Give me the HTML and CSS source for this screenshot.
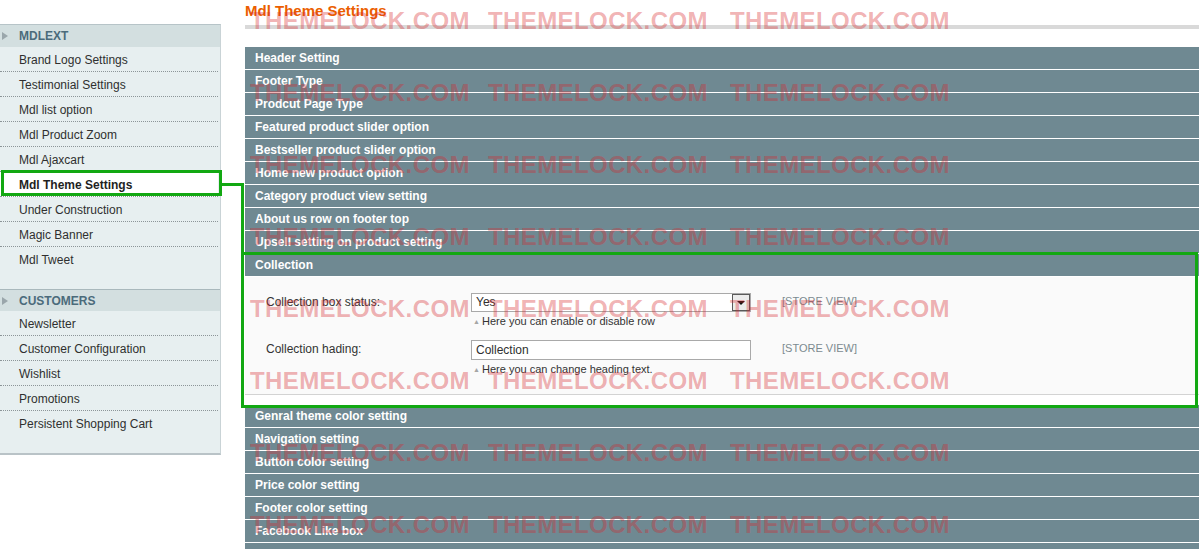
FILE: index.html
```html
<!DOCTYPE html>
<html>
<head>
<meta charset="utf-8">
<title>Mdl Theme Settings</title>
<link rel="stylesheet" href="styles.css">
</head>
<body>
<div class="page">
  <aside class="side">
    <div class="side-head"><span class="tri"></span>MDLEXT</div>
    <ul class="side-list">
      <li>Brand Logo Settings</li>
      <li>Testimonial Settings</li>
      <li>Mdl list option</li>
      <li>Mdl Product Zoom</li>
      <li>Mdl Ajaxcart</li>
      <li class="active">Mdl Theme Settings</li>
      <li>Under Construction</li>
      <li>Magic Banner</li>
      <li>Mdl Tweet</li>
    </ul>
    <div class="side-head group"><span class="tri"></span>CUSTOMERS</div>
    <ul class="side-list">
      <li>Newsletter</li>
      <li>Customer Configuration</li>
      <li>Wishlist</li>
      <li>Promotions</li>
      <li>Persistent Shopping Cart</li>
    </ul>
  </aside>

  <main class="main">
    <h3 class="title">Mdl Theme Settings</h3>
    <div class="sections">
      <div class="sec-row">Header Setting</div>
      <div class="sec-row">Footer Type</div>
      <div class="sec-row">Prodcut Page Type</div>
      <div class="sec-row">Featured product slider option</div>
      <div class="sec-row">Bestseller product slider option</div>
      <div class="sec-row">Home new product option</div>
      <div class="sec-row">Category product view setting</div>
      <div class="sec-row">About us row on footer top</div>
      <div class="sec-row">Upsell setting on product setting</div>
      <div class="sec-row">Collection</div>
      <div class="fieldset">
        <div class="field">
          <label class="label">Collection box status:</label>
          <div class="value">
            <div class="select"><span class="sel-text">Yes</span><span class="sel-btn"><span class="caret"></span></span></div>
            <p class="note"><span class="note-tri">&#9650;</span>Here you can enable or disable row</p>
          </div>
          <span class="scope">[STORE VIEW]</span>
        </div>
        <div class="field second">
          <label class="label">Collection hading:</label>
          <div class="value">
            <div class="input">Collection</div>
            <p class="note"><span class="note-tri">&#9650;</span>Here you can change heading text.</p>
          </div>
          <span class="scope">[STORE VIEW]</span>
        </div>
      </div>
      <div class="sec-row">Genral theme color setting</div>
      <div class="sec-row">Navigation setting</div>
      <div class="sec-row">Button color setting</div>
      <div class="sec-row">Price color setting</div>
      <div class="sec-row">Footer color setting</div>
      <div class="sec-row">Facebook Like box</div>
      <div class="sec-row short"></div>
    </div>
  </main>

  <div class="hl hl-side"></div>
  <div class="hl-line hl-h"></div>
  <div class="hl-line hl-v"></div>
  <div class="hl hl-main"></div>

  <div class="wm">
    <span>THEMELOCK.COM</span><span>THEMELOCK.COM</span><span>THEMELOCK.COM</span>
    <span>THEMELOCK.COM</span><span>THEMELOCK.COM</span><span>THEMELOCK.COM</span>
    <span>THEMELOCK.COM</span><span>THEMELOCK.COM</span><span>THEMELOCK.COM</span>
    <span>THEMELOCK.COM</span><span>THEMELOCK.COM</span><span>THEMELOCK.COM</span>
    <span>THEMELOCK.COM</span><span>THEMELOCK.COM</span><span>THEMELOCK.COM</span>
    <span>THEMELOCK.COM</span><span>THEMELOCK.COM</span><span>THEMELOCK.COM</span>
    <span>THEMELOCK.COM</span><span>THEMELOCK.COM</span><span>THEMELOCK.COM</span>
    <span>THEMELOCK.COM</span><span>THEMELOCK.COM</span><span>THEMELOCK.COM</span>
  </div>
</div>
</body>
</html>
```

FILE: styles.css
```css
* { box-sizing: border-box; }

html, body {
  margin: 0;
  padding: 0;
  background: #ffffff;
  overflow: hidden;
}

body {
  font-family: "Liberation Sans", Arial, Helvetica, sans-serif;
  font-size: 12px;
  color: #2f2f2f;
}

.page {
  position: relative;
  display: flex;
  align-items: flex-start;
  width: 1199px;
  height: 549px;
  overflow: hidden;
}

/* ---------- sidebar ---------- */
.side {
  width: 221px;
  margin-top: 24px;
  background: #e7eff0;
  border-top: 1px solid #b7c4c8;
  border-right: 1px solid #c9d3d6;
  border-bottom: 2px solid #b9c3c7;
  flex-shrink: 0;
}

.side-head {
  position: relative;
  height: 22px;
  line-height: 22px;
  padding-left: 19px;
  background: #d3dfe0;
  color: #4b6b7b;
  font-weight: bold;
  font-size: 12px;
}

.side-head.group {
  border-top: 1px solid #a9b8bc;
}

.tri {
  position: absolute;
  left: 2px;
  top: 7px;
  width: 0;
  height: 0;
  border-top: 4px solid transparent;
  border-bottom: 4px solid transparent;
  border-left: 6px solid #9aa6ab;
}

.side-list {
  list-style: none;
  margin: 0;
  padding: 0 0 18px 0;
}

.side-list li {
  height: 25px;
  padding-top: 2px;
  line-height: 22px;
  padding-left: 19px;
  border-bottom: 1px dotted #8c9598;
  margin-right: 2px;
}

.side-list li:last-child {
  border-bottom: none;
  height: 24px;
}

.side-list li.active {
  background: #ffffff;
  font-weight: bold;
  color: #1f1f1f;
}

/* ---------- main ---------- */
.main {
  flex: 1;
  margin-left: 24px;
  min-width: 0;
}

.title {
  margin: 0;
  padding-top: 2px;
  padding-bottom: 5px;
  line-height: 18px;
  font-size: 15px;
  font-weight: bold;
  color: #eb5e00;
  border-bottom: 4px solid #d9d9d9;
}

.sections {
  margin-top: 18px;
}

.sec-row {
  height: 23px;
  line-height: 22px;
  padding-left: 10px;
  background: #6f8992;
  border-bottom: 1px solid #ffffff;
  color: #ffffff;
  font-weight: bold;
  font-size: 12px;
  white-space: nowrap;
}

.sec-row.short {
  height: 6px;
  border-bottom: none;
}

.fieldset {
  background: #fafafa;
  border-bottom: 1px solid #d3d3d3;
  margin-bottom: 10px;
  padding: 16px 0 17px 21px;
}

.field {
  display: flex;
  align-items: flex-start;
}

.field.second {
  margin-top: 11px;
}

.label {
  width: 205px;
  flex-shrink: 0;
  line-height: 18px;
  color: #333333;
}

.value {
  width: 280px;
  flex-shrink: 0;
}

.select {
  position: relative;
  height: 19px;
  line-height: 17px;
  border: 1px solid #a9a9a9;
  background: #ffffff;
  padding-left: 4px;
}

.sel-btn {
  position: absolute;
  right: 0;
  top: 0;
  width: 18px;
  height: 17px;
  border: 1px solid #5a5a5a;
  background: #ececec;
}

.caret {
  position: absolute;
  left: 4px;
  top: 6px;
  width: 0;
  height: 0;
  border-left: 4px solid transparent;
  border-right: 4px solid transparent;
  border-top: 4px solid #111111;
}

.input {
  height: 20px;
  line-height: 18px;
  border: 1px solid #a9a9a9;
  background: #ffffff;
  padding-left: 4px;
}

.note {
  margin: 2px 0 0 0;
  line-height: 14px;
  font-size: 11px;
  color: #333333;
}

.note-tri {
  display: inline-block;
  width: 11px;
  padding-left: 2px;
  font-size: 7px;
  color: #a5a5a5;
  vertical-align: 1px;
}

.scope {
  margin-left: 31px;
  line-height: 17px;
  font-size: 11px;
  color: #7c8a90;
}

/* ---------- green highlight annotations ---------- */
.hl {
  position: absolute;
  border: 3px solid #12a812;
  pointer-events: none;
}

.hl-side {
  left: 1px;
  top: 170px;
  width: 221px;
  height: 26px;
}

.hl-main {
  left: 241px;
  top: 252px;
  width: 957px;
  height: 156px;
}

.hl-line {
  position: absolute;
  background: #12a812;
  pointer-events: none;
}

.hl-h {
  left: 221px;
  top: 183px;
  width: 23px;
  height: 3px;
}

.hl-v {
  left: 241px;
  top: 183px;
  width: 3px;
  height: 71px;
}

/* ---------- watermark overlay ---------- */
.wm {
  position: absolute;
  left: 250px;
  top: 9px;
  display: grid;
  grid-template-columns: 238px 242px 222px;
  grid-auto-rows: 72px;
  pointer-events: none;
}

.wm span {
  font-family: "Liberation Sans", Arial, sans-serif;
  font-weight: bold;
  font-size: 24px;
  line-height: 23px;
  letter-spacing: 0.4px;
  color: rgba(215, 40, 45, 0.37);
  white-space: nowrap;
}
```
